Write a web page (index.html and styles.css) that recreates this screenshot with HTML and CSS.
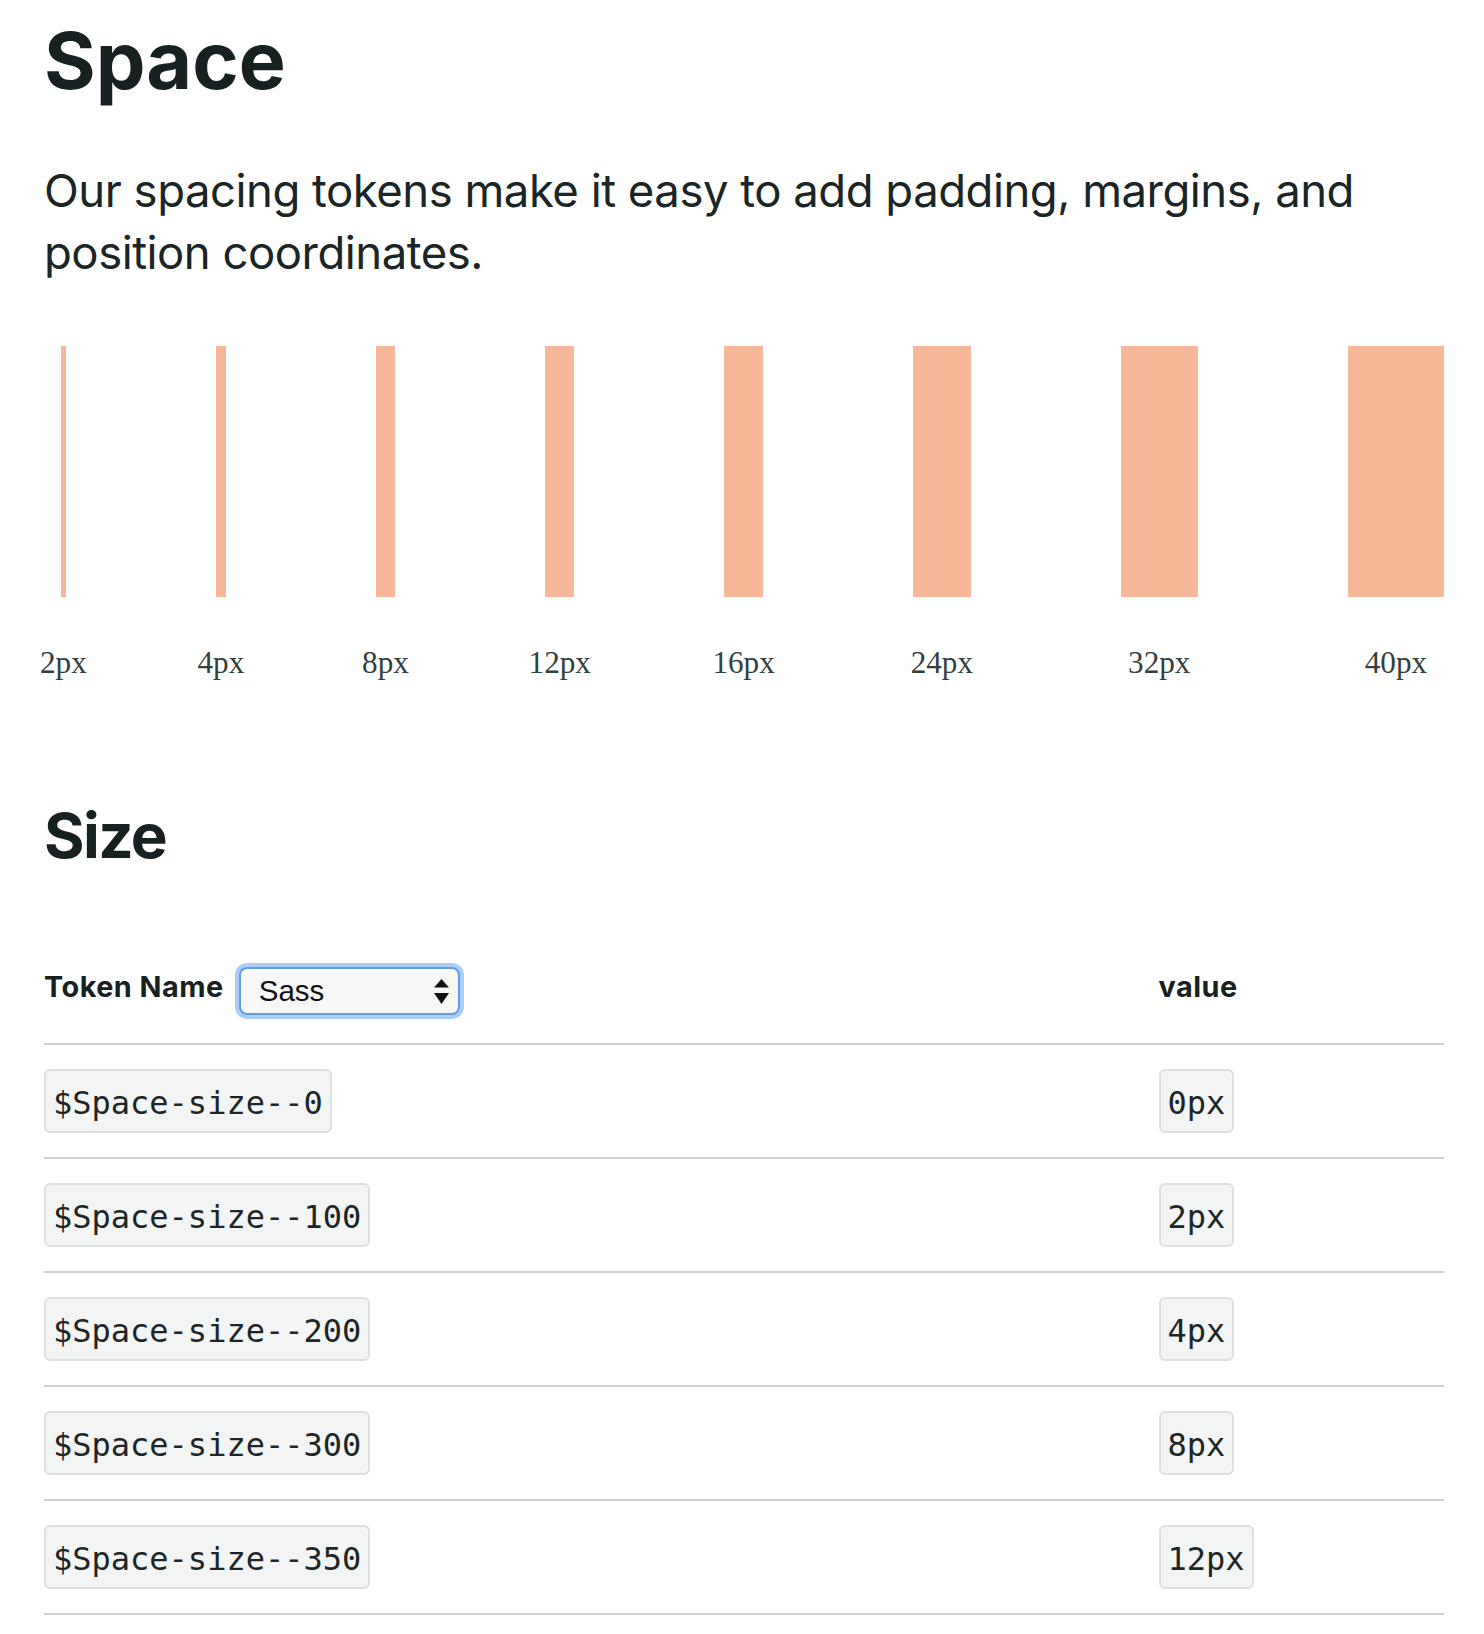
FILE: index.html
```html
<!DOCTYPE html>
<html lang="en">
<head>
<meta charset="utf-8">
<title>Space</title>
<link rel="stylesheet" href="styles.css">
</head>
<body>
<div class="page">
  <h1 class="title">Space</h1>
  <p class="lead">Our spacing tokens make it easy to add padding, margins, and position coordinates.</p>

  <div class="scale">
    <div class="step" style="width:4.8px"><div class="bar"></div><div class="label">2px</div></div>
    <div class="step" style="width:9.6px"><div class="bar"></div><div class="label">4px</div></div>
    <div class="step" style="width:19.2px"><div class="bar"></div><div class="label">8px</div></div>
    <div class="step" style="width:28.8px"><div class="bar"></div><div class="label">12px</div></div>
    <div class="step" style="width:38.4px"><div class="bar"></div><div class="label">16px</div></div>
    <div class="step" style="width:57.6px"><div class="bar"></div><div class="label">24px</div></div>
    <div class="step" style="width:76.8px"><div class="bar"></div><div class="label">32px</div></div>
    <div class="step" style="width:96px"><div class="bar"></div><div class="label">40px</div></div>
  </div>

  <h2 class="subtitle">Size</h2>

  <div class="table">
    <div class="row head">
      <div class="name-cell">
        <span class="th">Token Name</span>
        <div class="select">
          <span class="select-text">Sass</span>
          <svg class="select-arrows" width="15" height="25" viewBox="0 0 15 25" aria-hidden="true">
            <polygon points="7.5,0 15,8.5 0,8.5" fill="#111"/>
            <polygon points="0,14 15,14 7.5,25" fill="#111"/>
          </svg>
        </div>
      </div>
      <div class="value-cell"><span class="th">value</span></div>
    </div>
    <div class="row">
      <div><span class="chip">$Space-size--0</span></div>
      <div><span class="chip">0px</span></div>
    </div>
    <div class="row">
      <div><span class="chip">$Space-size--100</span></div>
      <div><span class="chip">2px</span></div>
    </div>
    <div class="row">
      <div><span class="chip">$Space-size--200</span></div>
      <div><span class="chip">4px</span></div>
    </div>
    <div class="row">
      <div><span class="chip">$Space-size--300</span></div>
      <div><span class="chip">8px</span></div>
    </div>
    <div class="row">
      <div><span class="chip">$Space-size--350</span></div>
      <div><span class="chip">12px</span></div>
    </div>
  </div>
</div>
</body>
</html>
```

FILE: styles.css
```css
html, body {
  margin: 0;
  padding: 0;
  background: #ffffff;
}

body {
  font-family: Inter, "Noto Sans", sans-serif;
  color: #182122;
}

.page {
  width: 1400px;
  padding: 12px 0 0 44px;
}

.title {
  margin: 0;
  font-size: 79px;
  line-height: 96px;
  font-weight: 700;
  color: #182122;
}

.lead {
  margin: 51.5px 0 0;
  font-size: 45.5px;
  line-height: 62px;
  font-weight: 400;
  letter-spacing: -0.5px;
  color: #1c2525;
}

.scale {
  display: flex;
  justify-content: space-between;
  padding-left: 17px;
  margin-top: 62.5px;
}

.step {
  flex: none;
  display: flex;
  flex-direction: column;
  align-items: center;
}

.bar {
  width: 100%;
  height: 251px;
  background: #f6b899;
}

.label {
  margin-top: 47.5px;
  font-family: "Liberation Serif", "Times New Roman", serif;
  font-size: 31.2px;
  line-height: 36px;
  color: #33403d;
  white-space: nowrap;
}

.subtitle {
  margin: 117px 0 0;
  font-size: 62px;
  line-height: 76px;
  font-weight: 700;
  letter-spacing: -1.6px;
  color: #182122;
}

.table {
  margin-top: 93.6px;
}

.row {
  display: grid;
  grid-template-columns: 1114.5px 1fr;
  align-items: center;
  padding: 24px 0;
  border-bottom: 2px solid #cdd0d0;
}

.row.head {
  align-items: start;
  padding: 0 0 27.7px;
}

.th {
  font-size: 28.8px;
  line-height: 40px;
  font-weight: 700;
  letter-spacing: 0.5px;
  color: #182122;
}

.name-cell {
  display: flex;
  align-items: flex-start;
}

.select {
  margin-left: 15px;
  width: 221px;
  height: 48px;
  box-sizing: border-box;
  border: 2px solid #5e9de9;
  border-radius: 8px;
  box-shadow: 0 0 0 4px #aacdf6;
  background: #f7f7f7;
  display: flex;
  align-items: center;
  justify-content: space-between;
  padding: 0 9px 0 18px;
  font-family: "Liberation Sans", Arial, sans-serif;
  font-size: 29.5px;
  color: #111111;
}

.select-text {
  line-height: 1;
}

.select-arrows {
  display: block;
}

.chip {
  display: inline-block;
  box-sizing: border-box;
  height: 64px;
  padding: 4px 7px 0;
  border: 2px solid #dde0e0;
  border-radius: 6px;
  background: #f3f4f4;
  font-family: "DejaVu Sans Mono", "Liberation Mono", monospace;
  font-size: 32px;
  line-height: 56px;
  color: #1c2626;
  white-space: nowrap;
}
```
